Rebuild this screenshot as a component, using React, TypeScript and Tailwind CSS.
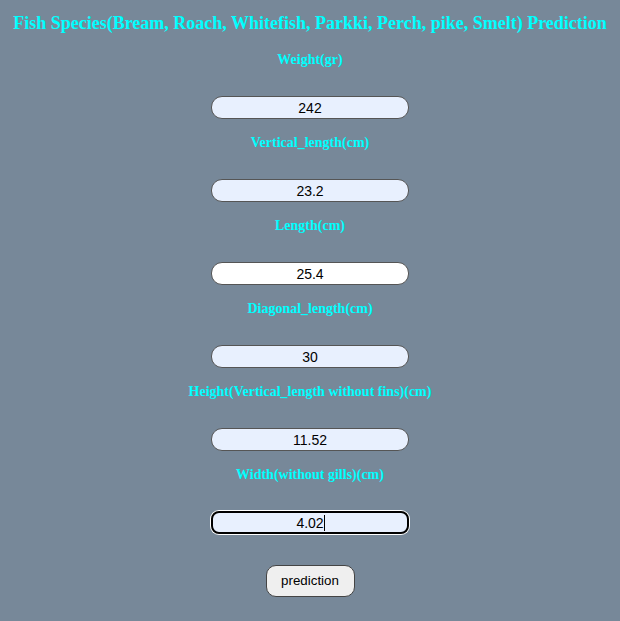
import React from "react";

const fields = [
  { label: "Weight(gr)", value: "242", fill: true },
  { label: "Vertical_length(cm)", value: "23.2", fill: true },
  { label: "Length(cm)", value: "25.4", fill: false },
  { label: "Diagonal_length(cm)", value: "30", fill: true },
  { label: "Height(Vertical_length without fins)(cm)", value: "11.52", fill: true },
  { label: "Width(without gills)(cm)", value: "4.02", fill: true, focused: true },
];

export default function App() {
  return (
    <div className="min-h-[621px] w-full bg-[#778899] flex flex-col items-center pt-[11px]">
      <h3 className="h-[24px] leading-[24px] text-[18px] font-bold text-[#00ffff] font-['Liberation_Serif',serif]">
        Fish Species(Bream, Roach, Whitefish, Parkki, Perch, pike, Smelt) Prediction
      </h3>

      {fields.map((f) => (
        <div key={f.label} className="mt-[12px] first-of-type:mt-[13px] flex flex-col items-center">
          <h5 className="h-[22px] pt-[2px] leading-[20px] text-[14px] font-bold text-[#00ffff] font-['Liberation_Serif',serif]">
            {f.label}
          </h5>
          <div className="relative mt-[26px]">
            <input
              readOnly
              value={f.value}
              className={
                f.focused
                  ? "block w-[198px] h-[23px] rounded-[8px] border-2 border-black shadow-[0_0_0_1px_#ffffff] bg-[#e8f0fe] text-center text-[14px] text-black caret-transparent outline-none font-['Liberation_Sans',Arial,sans-serif]"
                  : f.fill
                  ? "block w-[198px] h-[23px] rounded-[11px] border border-[#555555] bg-[#e8f0fe] text-center text-[14px] text-black outline-none font-['Liberation_Sans',Arial,sans-serif]"
                  : "block w-[198px] h-[23px] rounded-[11px] border border-[#555555] bg-white text-center text-[14px] text-black outline-none font-['Liberation_Sans',Arial,sans-serif]"
              }
            />
            {f.focused && (
              <span className="absolute left-[113px] top-[4px] h-[16px] w-[1px] bg-black" />
            )}
          </div>
        </div>
      ))}

      <button className="mt-[31px] h-[32px] w-[89px] rounded-[10px] border border-[#444444] bg-[#efefef] text-[13.33px] text-black font-['Liberation_Sans',Arial,sans-serif]">
        prediction
      </button>
    </div>
  );
}
